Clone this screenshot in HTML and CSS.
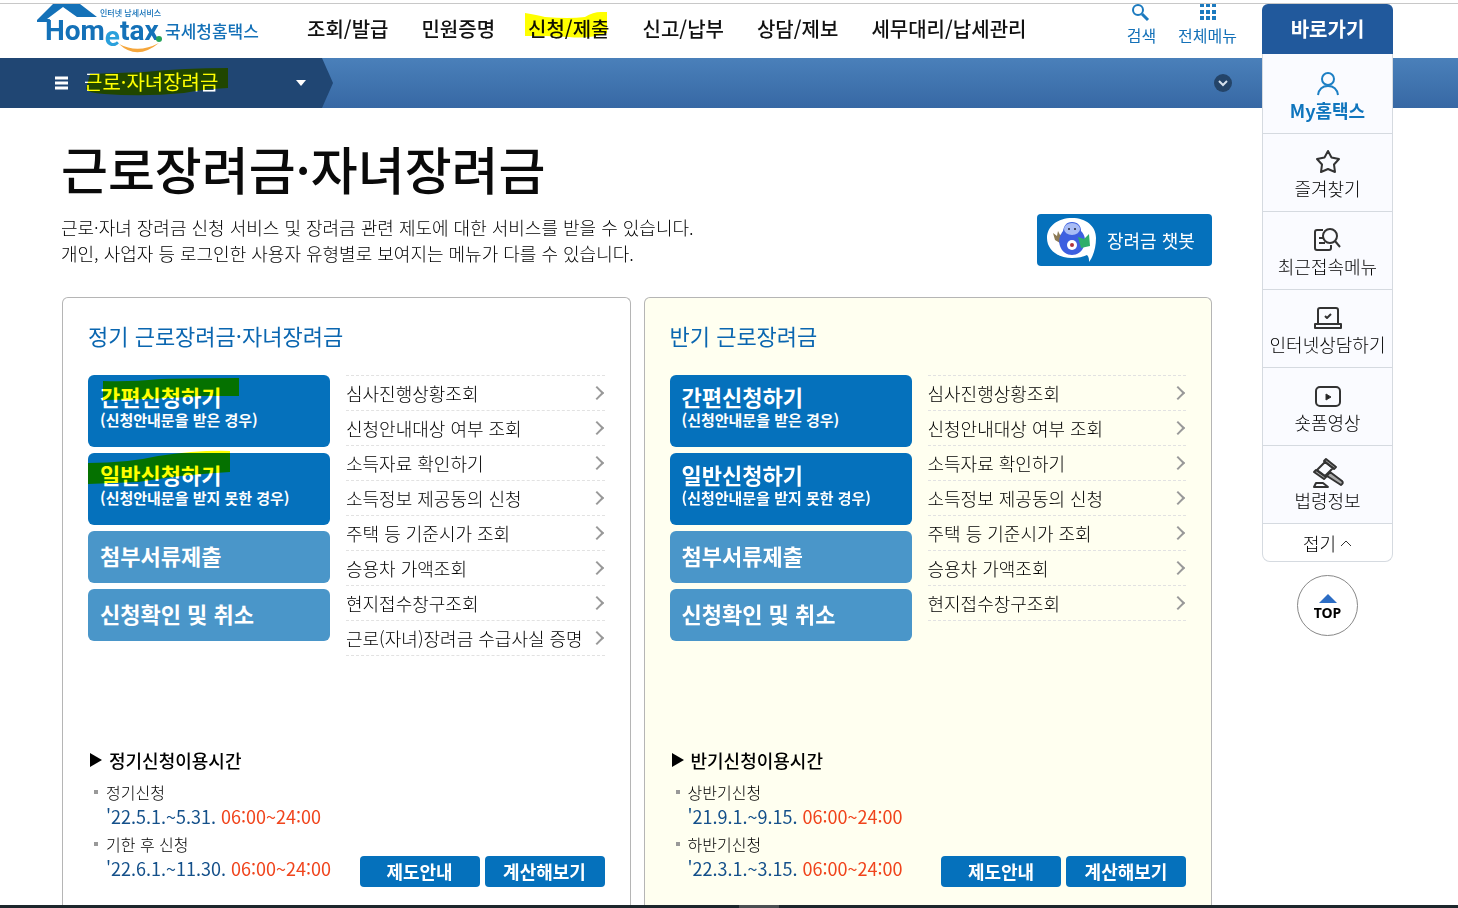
FILE: index.html
```html
<!DOCTYPE html>
<html lang="ko">
<head>
<meta charset="utf-8">
<title>국세청홈택스 - 근로장려금·자녀장려금</title>
<link rel="stylesheet" href="styles.css">
</head>
<body>
<header class="header">
  <a class="logo" href="#">
    <svg class="logo-roof" viewBox="0 0 130 50" aria-hidden="true">
      <path d="M25 0H43L60 13H40L26 3L10 15H13L12 18H0V16L16 0Z" fill="#1471b8"/>
      <path d="M82 40Q100 57 122 39Q101 50 82 40Z" fill="#f5a63c"/>
      <circle cx="122" cy="35" r="3" fill="#25a35a"/>
    </svg>
    <span class="logo-words">
      <span class="logo-tag">인터넷 납세서비스</span>
      <span class="logo-en">Hom<span class="logo-e">e</span>tax</span>
    </span>
    <span class="logo-ko">국세청홈택스</span>
  </a>
  <nav class="nav">
    <a href="#">조회/발급</a>
    <a href="#">민원증명</a>
    <a class="marked" href="#">신청/제출<svg class="mark mark-nav" viewBox="0 0 84 30" aria-hidden="true"><path d="M0 2Q12 4 20 6Q44 8 60 6Q68 1 76 1H82V22Q64 28 44 26L20 25H0Z"/></svg></a>
    <a href="#">신고/납부</a>
    <a href="#">상담/제보</a>
    <a href="#">세무대리/납세관리</a>
  </nav>
  <div class="utils">
    <button class="util" type="button">
      <svg width="20" height="18" viewBox="0 0 20 18" aria-hidden="true"><circle cx="7" cy="6" r="5" fill="none" stroke="#1c7abf" stroke-width="2"/><path d="M11 10L17 16" stroke="#1c7abf" stroke-width="3"/></svg>
      <span>검색</span>
    </button>
    <button class="util" type="button">
      <svg width="18" height="18" viewBox="0 0 18 18" aria-hidden="true" fill="#1c7abf"><path d="M1 0H5V3H1ZM7 0H11V3H7ZM13 0H17V3H13ZM1 6H5V10H1ZM7 6H11V10H7ZM13 6H17V10H13ZM1 12H5V16H1ZM7 12H11V16H7ZM13 12H17V16H13Z"/></svg>
      <span>전체메뉴</span>
    </button>
  </div>
</header>

<div class="bar">
  <button class="crumb" type="button">
    <svg width="14" height="14" viewBox="0 0 14 14" aria-hidden="true"><path d="M0 2H13M0 7H13M0 12H13" stroke="#fff" stroke-width="3"/></svg>
    <span class="marked">근로·자녀장려금<svg class="mark mark-bar" viewBox="0 0 144 30" aria-hidden="true"><path d="M6 7L60 5Q100 1 144 1V21Q120 22 100 26Q60 30 20 27Q4 26 2 22Z"/></svg></span>
    <svg class="crumb-arrow" width="10" height="6" viewBox="0 0 10 6" aria-hidden="true"><path d="M0 0H10L5 6Z" fill="#fff"/></svg>
  </button>
  <button class="expand" type="button" aria-label="펼치기">
    <svg width="20" height="20" viewBox="0 0 20 20" aria-hidden="true"><circle cx="10" cy="10" r="9" fill="#244468"/><path d="M6 8L10 12L14 8" fill="none" stroke="#d5e0ec" stroke-width="2"/></svg>
  </button>
</div>

<main class="main">
  <h1>근로장려금·자녀장려금</h1>
  <div class="intro">
    <p>근로·자녀 장려금 신청 서비스 및 장려금 관련 제도에 대한 서비스를 받을 수 있습니다.<br>개인, 사업자 등 로그인한 사용자 유형별로 보여지는 메뉴가 다를 수 있습니다.</p>
    <button class="chatbot" type="button">
      <svg width="50" height="44" viewBox="0 0 50 44" aria-hidden="true">
        <path d="M25 0C39 0 49 8 49 20C49 30 46 39 42 44C42 41 42 39 40 37C36 39 31 40 25 40C11 40 0 32 0 20S11 0 25 0Z" fill="#fff"/>
        <path d="M6 15L10 18L11 13L13 17L17 15L15 21L19 24L13 25L8 22Z" fill="#8c7a55"/>
        <path d="M25 4C31 4 34 8 34 13C38 17 39 22 37 28C35 34 30 37 25 37S15 34 13 28C11 22 13 17 16 13C17 8 19 4 25 4Z" fill="#3d5fe0"/>
        <ellipse cx="25" cy="11" rx="8" ry="6" fill="#a9bcf5"/>
        <circle cx="22" cy="11" r="1" fill="#223"/><circle cx="28" cy="11" r="1" fill="#223"/>
        <circle cx="25" cy="27" r="5" fill="#fff"/><circle cx="25" cy="27" r="2" fill="#b0333f"/>
        <path d="M31 19L37 21L42 16L43 28L34 30Z" fill="#2fae6a"/>
      </svg>
      <span>장려금 챗봇</span>
    </button>
  </div>

  <div class="cards">
    <section class="card">
      <h2>정기 근로장려금·자녀장려금</h2>
      <div class="card-body">
        <div class="actions">
          <button class="action" type="button">간편신청하기<small>(신청안내문을 받은 경우)</small><svg class="mark mark-a" viewBox="0 0 138 26" aria-hidden="true"><path d="M2 4Q30 5 60 2Q90 1 138 1V19H100Q60 22 2 23Z"/></svg></button>
          <button class="action" type="button">일반신청하기<small>(신청안내문을 받지 못한 경우)</small><svg class="mark mark-b" viewBox="0 0 142 36" aria-hidden="true"><path d="M0 13Q40 13 70 6Q110 0 142 1V22Q100 24 50 32L0 34Z"/></svg></button>
          <button class="action light" type="button">첨부서류제출</button>
          <button class="action light" type="button">신청확인 및 취소</button>
        </div>
        <ul class="links">
          <li><a href="#">심사진행상황조회</a></li>
          <li><a href="#">신청안내대상 여부 조회</a></li>
          <li><a href="#">소득자료 확인하기</a></li>
          <li><a href="#">소득정보 제공동의 신청</a></li>
          <li><a href="#">주택 등 기준시가 조회</a></li>
          <li><a href="#">승용차 가액조회</a></li>
          <li><a href="#">현지접수창구조회</a></li>
          <li><a href="#">근로(자녀)장려금 수급사실 증명</a></li>
        </ul>
      </div>
      <div class="card-foot">
        <div class="times">
          <h3>정기신청이용시간</h3>
          <ul>
            <li>정기신청<div class="when">'22.5.1.~5.31. <em>06:00~24:00</em></div></li>
            <li>기한 후 신청<div class="when">'22.6.1.~11.30. <em>06:00~24:00</em></div></li>
          </ul>
        </div>
        <div class="foot-buttons"><button type="button">제도안내</button><button type="button">계산해보기</button></div>
      </div>
    </section>

    <section class="card half">
      <h2>반기 근로장려금</h2>
      <div class="card-body">
        <div class="actions">
          <button class="action" type="button">간편신청하기<small>(신청안내문을 받은 경우)</small></button>
          <button class="action" type="button">일반신청하기<small>(신청안내문을 받지 못한 경우)</small></button>
          <button class="action light" type="button">첨부서류제출</button>
          <button class="action light" type="button">신청확인 및 취소</button>
        </div>
        <ul class="links">
          <li><a href="#">심사진행상황조회</a></li>
          <li><a href="#">신청안내대상 여부 조회</a></li>
          <li><a href="#">소득자료 확인하기</a></li>
          <li><a href="#">소득정보 제공동의 신청</a></li>
          <li><a href="#">주택 등 기준시가 조회</a></li>
          <li><a href="#">승용차 가액조회</a></li>
          <li><a href="#">현지접수창구조회</a></li>
        </ul>
      </div>
      <div class="card-foot">
        <div class="times">
          <h3>반기신청이용시간</h3>
          <ul>
            <li>상반기신청<div class="when">'21.9.1.~9.15. <em>06:00~24:00</em></div></li>
            <li>하반기신청<div class="when">'22.3.1.~3.15. <em>06:00~24:00</em></div></li>
          </ul>
        </div>
        <div class="foot-buttons"><button type="button">제도안내</button><button type="button">계산해보기</button></div>
      </div>
    </section>
  </div>
</main>
<div class="taskbar"></div>

<aside class="quick">
  <div class="quick-title">바로가기</div>
  <div class="quick-list">
    <a class="my" href="#"><svg viewBox="0 0 32 28" aria-hidden="true"><circle cx="16" cy="9" r="6"/><path d="M6 25C7 19 11 16 16 16S25 19 26 25"/></svg>My홈택스</a>
    <a href="#"><svg viewBox="0 0 32 28" aria-hidden="true"><path d="M16 3L19.5 9.5L27 11L22 16.500L23 24L16 21L9 24L10 16.500L5 11L12.500 9.500Z"/></svg>즐겨찾기</a>
    <a href="#"><svg viewBox="0 0 32 28" aria-hidden="true"><path d="M11 4H5Q3 4 3 6V22Q3 24 5 24H17Q19 24 19 22V19M7 12H11M7 17H13"/><circle cx="18" cy="10" r="7"/><path d="M23 15L28 21"/></svg>최근접속메뉴</a>
    <a href="#"><svg viewBox="0 0 32 28" aria-hidden="true"><path d="M6 20V6Q6 4 8 4H24Q26 4 26 6V20M3 20H29V24H3ZM13 12L15 14L19 10"/></svg>인터넷상담하기</a>
    <a href="#"><svg viewBox="0 0 32 28" aria-hidden="true"><rect x="4" y="5" width="24" height="19" rx="4"/><path d="M14 12L19 15L14 18Z" fill="#222" stroke-width="1"/></svg>숏폼영상</a>
    <a href="#"><svg viewBox="0 0 32 28" aria-hidden="true"><path d="M12 1L14 -1L24 7L22 9ZM2 12L4 10L14 17L12 19ZM18 12L30 21Q32 23 29 25L15 16Z" fill="#aaa"/><path d="M13 2L21 8L13 16L5 10ZM2 27L4 23H11L16 27Z"/></svg>법령정보</a>
    <button class="fold" type="button"><span>접기</span><svg viewBox="0 0 12 8" aria-hidden="true"><path d="M1 7L6 2L11 7"/></svg></button>
  </div>
  <a class="top" href="#"><svg width="18" height="9" viewBox="0 0 18 9" aria-hidden="true"><path d="M0 9L9 0L18 9Z" fill="#2b6cc4"/></svg>TOP</a>
</aside>
</body>
</html>
```
FILE: styles.css
```css
* { box-sizing: border-box; }
body {
  margin: 0;
  min-height: 100vh;
  position: relative;
  display: flex;
  flex-direction: column;
  background: #fff;
  color: #000;
  font-family: "Noto Sans CJK KR", "Noto Sans", sans-serif;
  font-size: 18px;
  font-weight: 300;
}
h1, h2, h3, p, ul { margin: 0; padding: 0; }
ul { list-style: none; }
a { color: inherit; text-decoration: none; }
button { font: inherit; color: inherit; border: 0; padding: 0; background: none; cursor: pointer; }

.marked { position: relative; }
.mark { position: absolute; fill: #ff0; mix-blend-mode: multiply; pointer-events: none; }
.mark-nav { left: -3px; top: -3px; width: 84px; height: 30px; }
.mark-bar { left: 0; top: 0; width: 144px; height: 30px; }
.mark-a { left: 13px; top: 2px; width: 138px; height: 26px; }
.mark-b { left: 0; top: -3px; width: 142px; height: 36px; }

.header {
  display: flex;
  align-items: flex-start;
  height: 55px;
  margin-top: 3px;
  padding: 0 221px 0 37px;
  border-top: 1px solid #c8c8c8;
}
.logo { position: relative; flex: none; display: flex; width: 224px; height: 50px; color: #1471b8; }
.logo-roof { position: absolute; left: 0; top: 0; width: 130px; height: 50px; }
.logo-words { display: flex; flex-direction: column; width: 128px; padding: 3px 0 0 8px; white-space: nowrap; }
.logo-tag { margin-left: 55px; font-size: 8px; line-height: 11px; font-weight: 500; }
.logo-en { font: bold 28px/26px Roboto, sans-serif; }
.logo-e { color: #2aa0dc; position: relative; top: 6px; }
.logo-ko { font-size: 17px; line-height: 26px; font-weight: 500; padding-top: 14px; white-space: nowrap; }

.nav { display: flex; gap: 33px; margin-left: 46px; padding-top: 10px; font-size: 20px; line-height: 30px; font-weight: 500; color: #111; white-space: nowrap; }
.utils { display: flex; gap: 22px; margin-left: auto; color: #1471b8; }
.util { display: flex; flex-direction: column; align-items: center; font-size: 16px; line-height: 24px; font-weight: 400; white-space: nowrap; }
.util svg { margin-bottom: 1px; }

.bar { display: flex; align-items: center; justify-content: space-between; height: 50px; padding-right: 225px; background: linear-gradient(#4a80ba, #3768a4); }
.crumb {
  display: flex;
  align-items: center;
  width: 333px;
  height: 50px;
  padding: 0 27px 0 55px;
  background: #204673;
  clip-path: polygon(0 0, 322px 0, 333px 50%, 322px 100%, 0 100%);
  color: #fff;
  font-size: 20px;
  line-height: 30px;
  font-weight: 400;
}
.crumb .marked { margin: 0 0 2px 15px; }
.crumb-arrow { margin-left: auto; }
.expand { display: flex; }

.main { flex: 1; display: flex; flex-direction: column; padding: 30px 246px 0 61px; }
h1 { font-size: 51px; line-height: 60px; font-weight: 500; color: #0a0a0a; }
.intro { display: flex; justify-content: space-between; align-items: flex-start; margin: 16px 0 31px; line-height: 26px; }
.chatbot { display: flex; align-items: center; gap: 10px; width: 175px; height: 52px; padding-left: 10px; border-radius: 4px; background: #0571bc; color: #fff; font-weight: 400; white-space: nowrap; }

.cards { flex: 1; display: grid; grid-template-columns: 1fr 1fr; gap: 13px; margin-left: 1px; }
.card { display: flex; flex-direction: column; padding: 22px 25px 18px; border: 1px solid #b5b5b5; border-bottom: 0; border-radius: 6px 6px 0 0; }
.half { background: #fffff0; }
h2 { margin-bottom: 25px; font-size: 22px; line-height: 30px; font-weight: 400; color: #0a66b0; }
.card-body { display: flex; gap: 16px; min-height: 373px; }
.actions { display: flex; flex-direction: column; gap: 6px; flex: 0 0 242px; }
.action { position: relative; height: 72px; padding: 0 0 8px 12px; border-radius: 6px; background: #0571bc; color: #fff; text-align: left; font-size: 22px; line-height: 26px; font-weight: 700; }
.action small { display: block; font-size: 15px; line-height: 22px; }
.action.light { height: 52px; padding-bottom: 4px; background: #4a96c9; }
.links { flex: 1; border-top: 1px dashed #e2e2e2; align-self: flex-start; }
.links a { display: flex; align-items: center; justify-content: space-between; height: 35px; border-bottom: 1px dashed #e2e2e2; white-space: nowrap; }
.links a::after { content: ""; width: 8px; height: 8px; margin-right: 3px; border: solid #999; border-width: 2px 2px 0 0; transform: rotate(45deg); }

.card-foot { display: flex; align-items: flex-end; justify-content: space-between; margin-top: auto; }
.times { padding-bottom: 7px; white-space: nowrap; }
h3 { display: flex; align-items: center; gap: 7px; margin-bottom: 8px; font-size: 18px; line-height: 24px; font-weight: 500; color: #000; }
h3::before { content: ""; margin-left: 2px; border: solid transparent; border-width: 7px 0 7px 12px; border-left-color: #000; }
.times ul { display: grid; gap: 4px; }
.times li { position: relative; padding-left: 18px; font-size: 16px; line-height: 24px; }
.times li::before { content: ""; position: absolute; left: 6px; top: 10px; width: 4px; height: 4px; background: #999; }
.when { font-size: 18px; font-weight: 400; color: #14508a; }
.when em { font-style: normal; color: #f0441c; }
.foot-buttons { display: flex; gap: 5px; }
.foot-buttons button { width: 120px; height: 31px; border-radius: 4px; background: #0571bc; color: #fff; font-weight: 700; line-height: 28px; padding-bottom: 2px; }

.taskbar { height: 3px; background: linear-gradient(90deg, #1c272c 739px, #4a4f52 739px, #4a4f52 779px, #1c272c 779px); }

.quick { position: absolute; top: 4px; right: 65px; width: 131px; }
.quick-title { height: 50px; border-radius: 6px 6px 0 0; background: #21599c; color: #fff; font-size: 20px; line-height: 50px; font-weight: 700; text-align: center; }
.quick-list { border: 1px solid #d5dae0; border-top: 0; border-radius: 0 0 8px 8px; background: #fff; overflow: hidden; }
.quick-list a { display: flex; flex-direction: column; align-items: center; height: 78px; padding-top: 14px; border-bottom: 1px solid #d5dae0; background: #fafbff; line-height: 24px; white-space: nowrap; }
.quick-list svg { width: 32px; height: 28px; fill: none; stroke: #333; stroke-width: 2; stroke-linejoin: round; overflow: visible; }
.quick-list .my { height: 80px; padding-top: 16px; color: #0f75bd; font-weight: 700; }
.quick-list .my svg { stroke: #1c7fc4; }
.quick-list .fold { display: flex; align-items: center; justify-content: center; gap: 4px; width: 100%; height: 37px; line-height: 36px; }
.quick-list .fold svg { width: 12px; height: 8px; stroke-width: 1; }
.top { display: flex; flex-direction: column; align-items: center; width: 61px; height: 61px; margin: 13px auto 0; padding-top: 18px; border: 1px solid #888; border-radius: 50%; background: #fff; font: bold 14px/20px "Noto Sans", sans-serif; }
```
